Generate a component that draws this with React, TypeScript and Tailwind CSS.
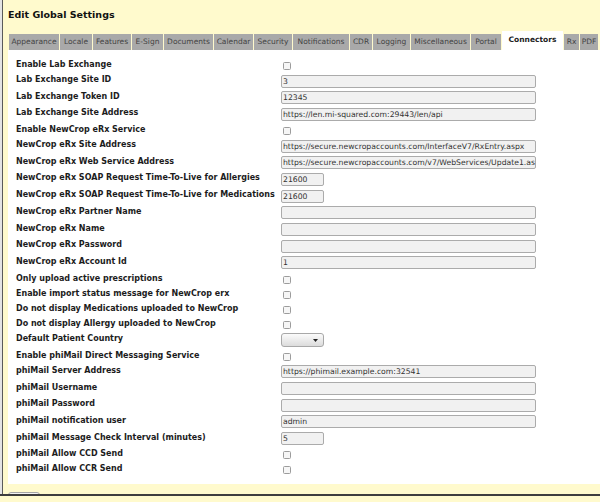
import React from 'react';

type Kind = 'cb' | 'text' | 'short' | 'select';

type Row = { label: string; kind: Kind; value?: string };

const TABS: { name: string; w: number }[] = [
  { name: 'Appearance', w: 50 },
  { name: 'Locale', w: 32 },
  { name: 'Features', w: 38 },
  { name: 'E-Sign', w: 31 },
  { name: 'Documents', w: 49 },
  { name: 'Calendar', w: 39 },
  { name: 'Security', w: 38 },
  { name: 'Notifications', w: 56 },
  { name: 'CDR', w: 22 },
  { name: 'Logging', w: 37 },
  { name: 'Miscellaneous', w: 59 },
  { name: 'Portal', w: 30 },
  { name: 'Connectors', w: 61 },
  { name: 'Rx', w: 15 },
  { name: 'PDF', w: 18 },
];

const ACTIVE = 'Connectors';

const ROWS: Row[] = [
  { label: 'Enable Lab Exchange', kind: 'cb' },
  { label: 'Lab Exchange Site ID', kind: 'text', value: '3' },
  { label: 'Lab Exchange Token ID', kind: 'text', value: '12345' },
  { label: 'Lab Exchange Site Address', kind: 'text', value: 'https://len.mi-squared.com:29443/len/api' },
  { label: 'Enable NewCrop eRx Service', kind: 'cb' },
  {
    label: 'NewCrop eRx Site Address',
    kind: 'text',
    value: 'https://secure.newcropaccounts.com/InterfaceV7/RxEntry.aspx',
  },
  {
    label: 'NewCrop eRx Web Service Address',
    kind: 'text',
    value: 'https://secure.newcropaccounts.com/v7/WebServices/Update1.aspx',
  },
  { label: 'NewCrop eRx SOAP Request Time-To-Live for Allergies', kind: 'short', value: '21600' },
  { label: 'NewCrop eRx SOAP Request Time-To-Live for Medications', kind: 'short', value: '21600' },
  { label: 'NewCrop eRx Partner Name', kind: 'text' },
  { label: 'NewCrop eRx Name', kind: 'text' },
  { label: 'NewCrop eRx Password', kind: 'text' },
  { label: 'NewCrop eRx Account Id', kind: 'text', value: '1' },
  { label: 'Only upload active prescriptions', kind: 'cb' },
  { label: 'Enable import status message for NewCrop erx', kind: 'cb' },
  { label: 'Do not display Medications uploaded to NewCrop', kind: 'cb' },
  { label: 'Do not display Allergy uploaded to NewCrop', kind: 'cb' },
  { label: 'Default Patient Country', kind: 'select' },
  { label: 'Enable phiMail Direct Messaging Service', kind: 'cb' },
  { label: 'phiMail Server Address', kind: 'text', value: 'https://phimail.example.com:32541' },
  { label: 'phiMail Username', kind: 'text' },
  { label: 'phiMail Password', kind: 'text' },
  { label: 'phiMail notification user', kind: 'text', value: 'admin' },
  { label: 'phiMail Message Check Interval (minutes)', kind: 'short', value: '5' },
  { label: 'phiMail Allow CCD Send', kind: 'cb' },
  { label: 'phiMail Allow CCR Send', kind: 'cb' },
];

function Field({ row }: { row: Row }) {
  if (row.kind === 'cb') {
    return (
      <span className="ml-[2px] mt-[3.5px] block h-[8px] w-[8px] rounded-[1.5px] border border-[#9c9c9c] bg-[#f6f6f6]" />
    );
  }
  if (row.kind === 'select') {
    return (
      <div className="mt-[1px] flex h-[14px] w-[43px] items-center justify-end rounded-[3px] border border-[#a8a8a8] bg-gradient-to-b from-[#fbfbfb] to-[#dcdcdc] pr-[5px]">
        <svg width="5" height="3" viewBox="0 0 5 3">
          <path d="M0 0h5L2.5 3z" fill="#222" />
        </svg>
      </div>
    );
  }
  return (
    <div
      className={
        (row.kind === 'short' ? 'w-[43px] ' : 'w-[255px] ') +
        'mt-[1px] h-[13px] overflow-hidden whitespace-nowrap rounded-[2px] border border-[#ababab] bg-[#f1f1f1] pl-[1px] text-[7.7px] leading-[11px] text-[#333]'
      }
    >
      {row.value ?? ''}
    </div>
  );
}

function SettingRow({ row }: { row: Row }) {
  const h =
    row.kind === 'cb' ? 'h-[15px]' : row.kind === 'select' ? 'h-[17.3px]' : 'h-[16.7px]';
  return (
    <div className={'flex items-start ' + h}>
      <div className="w-[265px] shrink-0 whitespace-nowrap pt-[1.5px] text-[8px] font-bold leading-[10px] text-[#1c1c1c]">
        {row.label}
      </div>
      <Field row={row} />
    </div>
  );
}

export default function App() {
  return (
    <div
      className="flex h-[502px] w-[600px] flex-col overflow-hidden bg-[#fffacd]"
      style={{ fontFamily: '"DejaVu Sans", Verdana, sans-serif' }}
    >
      <div className="flex h-[496px] shrink-0 border-b-2 border-[#3d3d3d]">
        <div className="w-[2px] shrink-0 bg-[#e4e4e4]" />
        <div className="flex min-w-0 flex-1 flex-col overflow-hidden border-l border-[#5a5a5a]">
          <div className="pl-[5px] pt-[9px] text-[9.5px] font-bold leading-[12px] text-[#111]">
            Edit Global Settings
          </div>

          <div className="mt-[10px] flex h-[19px] items-end gap-[1px] pl-[6px]">
            {TABS.map((t) =>
              t.name === ACTIVE ? (
                <div
                  key={t.name}
                  style={{ width: t.w }}
                  className="flex h-[19px] shrink-0 items-center justify-center bg-white pb-[2px] text-[7.5px] font-bold text-[#222]"
                >
                  {t.name}
                </div>
              ) : (
                <div
                  key={t.name}
                  style={{ width: t.w }}
                  className="flex h-[16px] shrink-0 items-center justify-center bg-[#a9a9a9] text-[7.5px] text-[#444]"
                >
                  {t.name}
                </div>
              ),
            )}
          </div>

          <div className="ml-[5px] h-[434px] shrink-0 bg-white pl-[8px] pt-[8.5px]">
            {ROWS.map((r) => (
              <SettingRow key={r.label} row={r} />
            ))}
          </div>

          <div className="ml-[5px] mt-[8px] h-[12px] w-[32px] shrink-0 rounded-[3px] border border-[#a5a5a5] bg-[#f2f2f2]" />
        </div>
      </div>
    </div>
  );
}
